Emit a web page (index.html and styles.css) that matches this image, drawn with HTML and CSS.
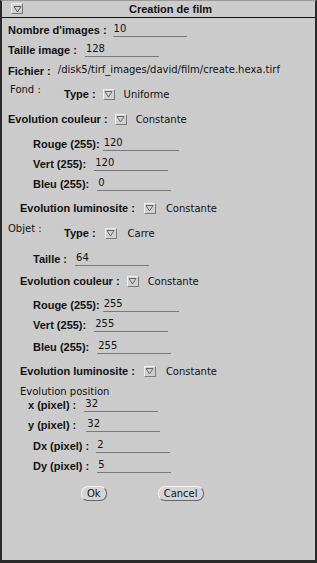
FILE: index.html
```html
<!DOCTYPE html>
<html>
<head>
<meta charset="utf-8">
<link rel="stylesheet" href="styles.css">
</head>
<body>
<div class="window">
  <div class="titlebar">
    <span class="winbtn"><svg width="9" height="8" viewBox="0 0 9 8"><path d="M1 1.5 H8 L4.5 7 Z" fill="none" stroke="#555" stroke-width="1"/></svg></span>
    <span class="title">Creation de film</span>
  </div>
  <div class="body">
    <div class="row r1"><span class="lbl">Nombre d'images :</span><span class="field f-nb">10</span></div>
    <div class="row r2"><span class="lbl">Taille image :</span><span class="field f-ti">128</span></div>
    <div class="row r3"><span class="lbl">Fichier :</span><span class="field f-fi">/disk5/tirf_images/david/film/create.hexa.tirf</span></div>
    <div class="row group r4"><span class="glbl g-fond">Fond :</span><span class="lbl">Type :</span><span class="menu"><svg width="9" height="8" viewBox="0 0 9 8"><path d="M1 1.5 H8 L4.5 7 Z" fill="none" stroke="#666" stroke-width="1"/></svg></span><span class="val">Uniforme</span></div>
    <div class="row r5"><span class="lbl">Evolution couleur :</span><span class="menu"><svg width="9" height="8" viewBox="0 0 9 8"><path d="M1 1.5 H8 L4.5 7 Z" fill="none" stroke="#666" stroke-width="1"/></svg></span><span class="val">Constante</span></div>
    <div class="row r6 ind2"><span class="lbl">Rouge (255):</span><span class="field f-rg">120</span></div>
    <div class="row r7 ind2"><span class="lbl">Vert (255):</span><span class="field f-vt">120</span></div>
    <div class="row r8 ind2"><span class="lbl">Bleu (255):</span><span class="field f-bl">0</span></div>
    <div class="row r9 ind1"><span class="lbl">Evolution luminosite :</span><span class="menu"><svg width="9" height="8" viewBox="0 0 9 8"><path d="M1 1.5 H8 L4.5 7 Z" fill="none" stroke="#666" stroke-width="1"/></svg></span><span class="val">Constante</span></div>
    <div class="row group r10"><span class="glbl g-obj">Objet :</span><span class="lbl">Type :</span><span class="menu m-wide"><svg width="9" height="8" viewBox="0 0 9 8"><path d="M1 1.5 H8 L4.5 7 Z" fill="none" stroke="#666" stroke-width="1"/></svg></span><span class="val v-wide">Carre</span></div>
    <div class="row r11 ind2"><span class="lbl">Taille :</span><span class="field f-ta">64</span></div>
    <div class="row r12 ind1"><span class="lbl">Evolution couleur :</span><span class="menu"><svg width="9" height="8" viewBox="0 0 9 8"><path d="M1 1.5 H8 L4.5 7 Z" fill="none" stroke="#666" stroke-width="1"/></svg></span><span class="val">Constante</span></div>
    <div class="row r13 ind2"><span class="lbl">Rouge (255):</span><span class="field f-rg">255</span></div>
    <div class="row r14 ind2"><span class="lbl">Vert (255):</span><span class="field f-vt">255</span></div>
    <div class="row r15 ind2"><span class="lbl">Bleu (255):</span><span class="field f-bl">255</span></div>
    <div class="row r16 ind1"><span class="lbl">Evolution luminosite :</span><span class="menu"><svg width="9" height="8" viewBox="0 0 9 8"><path d="M1 1.5 H8 L4.5 7 Z" fill="none" stroke="#666" stroke-width="1"/></svg></span><span class="val">Constante</span></div>
    <div class="row r17 ind1"><span class="glbl">Evolution position</span></div>
    <div class="row r18 ind15"><span class="lbl">x (pixel) :</span><span class="field f-x">32</span></div>
    <div class="row r19 ind15"><span class="lbl">y (pixel) :</span><span class="field f-y">32</span></div>
    <div class="row r20 ind2"><span class="lbl">Dx (pixel) :</span><span class="field f-dx">2</span></div>
    <div class="row r21 ind2"><span class="lbl">Dy (pixel) :</span><span class="field f-dy">5</span></div>
    <div class="buttons">
      <span class="btn b-ok">Ok</span>
      <span class="btn b-cancel">Cancel</span>
    </div>
  </div>
</div>
</body>
</html>
```
FILE: styles.css
```css
html, body { margin: 0; padding: 0; background: #c8c8c8; }
body { width: 317px; height: 563px; overflow: hidden; }
.window {
  box-sizing: border-box;
  width: 317px; height: 563px;
  background: #cbcbcb;
  border-left: 2px solid #2a2a2a;
  border-right: 2px solid #2a2a2a;
  border-bottom: 3px solid #2a2a2a;
  border-top: 1px solid #9a9a9a;
  font-family: "DejaVu Sans", sans-serif;
  color: #111;
  display: flex; flex-direction: column;
}
.titlebar {
  height: 16px;
  display: flex; align-items: center;
  border-bottom: 1px solid #111;
  position: relative;
}
.winbtn {
  position: absolute; left: 9px; top: 2px;
  width: 12px; height: 11px; box-sizing: border-box;
  border: 1px solid; border-color: #f0f0f0 #777 #777 #f0f0f0;
  background: #d2d2d2;
  display: flex; align-items: center; justify-content: center;
}
.title {
  flex: 1; text-align: center; font-weight: bold; font-size: 11px;
  font-family: "Liberation Sans", sans-serif; padding-left: 24px;
}
.body { display: flex; flex-direction: column; padding-left: 6px; }
.row { display: flex; align-items: center; height: 16px; font-size: 10px; }
.lbl {
  font-family: "Liberation Sans", sans-serif;
  font-weight: bold; white-space: pre; font-size: 11px;
}
.val { font-size: 10px; margin-left: 9px; }
.glbl { font-size: 10px; }
.field {
  box-sizing: border-box; height: 14px; margin-left: 8px;
  border-bottom: 1px solid #7a7a7a; padding-left: 1px; line-height: 12px;
  font-size: 10px;
}
.menu {
  width: 12px; height: 11px; box-sizing: border-box; margin-left: 7px;
  border: 1px solid; border-color: #f2f2f2 #7a7a7a #7a7a7a #f2f2f2;
  background: #d0d0d0;
  display: flex; align-items: center; justify-content: center;
}
.r9 .menu, .r16 .menu { margin-left: 9px; }
.r9 .val, .r16 .val { margin-left: 10px; }
.m-wide { margin-left: 9px; }
.v-wide { margin-left: 11px; }
.group { height: 20px; }
.g-fond { align-self: flex-start; margin-left: 2px; width: 54px; }
.g-obj { align-self: flex-start; width: 56px; }
.ind1 { padding-left: 12px; }
.ind15 { padding-left: 20px; }
.ind2 { padding-left: 25px; }
.r1 { margin-top: 4px; }
.r2 { margin-top: 4px; }
.r3 { margin-top: 5px; }
.r4 { margin-top: 5px; }
.r5 { margin-top: 7px; }
.r6 { margin-top: 9px; }
.r7 { margin-top: 4px; }
.r8 { margin-top: 4px; }
.r9 { margin-top: 8px; }
.r10 { margin-top: 7px; }
.r11 { margin-top: 8px; }
.r12 { margin-top: 6px; }
.r13 { margin-top: 8px; }
.r14 { margin-top: 4px; }
.r15 { margin-top: 6px; }
.r16 { margin-top: 8px; }
.r17 { margin-top: 7px; height: 11px; }
.r18 { margin-top: 0; }
.r19 { margin-top: 4px; }
.r20 { margin-top: 5px; }
.r21 { margin-top: 4px; }
.f-nb { width: 74px; margin-left: 6px; }
.f-ti { width: 74px; }
.f-fi { width: 252px; border-bottom: none; margin-left: 6px; }
.f-rg { width: 76px; margin-left: 3px; }
.f-vt { width: 74px; }
.f-bl { width: 74px; }
.f-ta { width: 74px; }
.f-x { width: 74px; }
.f-y { width: 74px; margin-left: 10px; }
.f-dx { width: 74px; margin-left: 7px; }
.f-dy { width: 74px; }
.buttons { display: flex; margin-top: 11px; height: 16px; align-items: center; padding-left: 73px; }
.btn {
  font-size: 10px; height: 13px; line-height: 13px;
  padding: 0 5px; border-radius: 7px;
  border: 1px solid; border-color: #f4f4f4 #666 #666 #f4f4f4;
  background: #d4d4d4;
}
.b-cancel { margin-left: 51px; }
```
